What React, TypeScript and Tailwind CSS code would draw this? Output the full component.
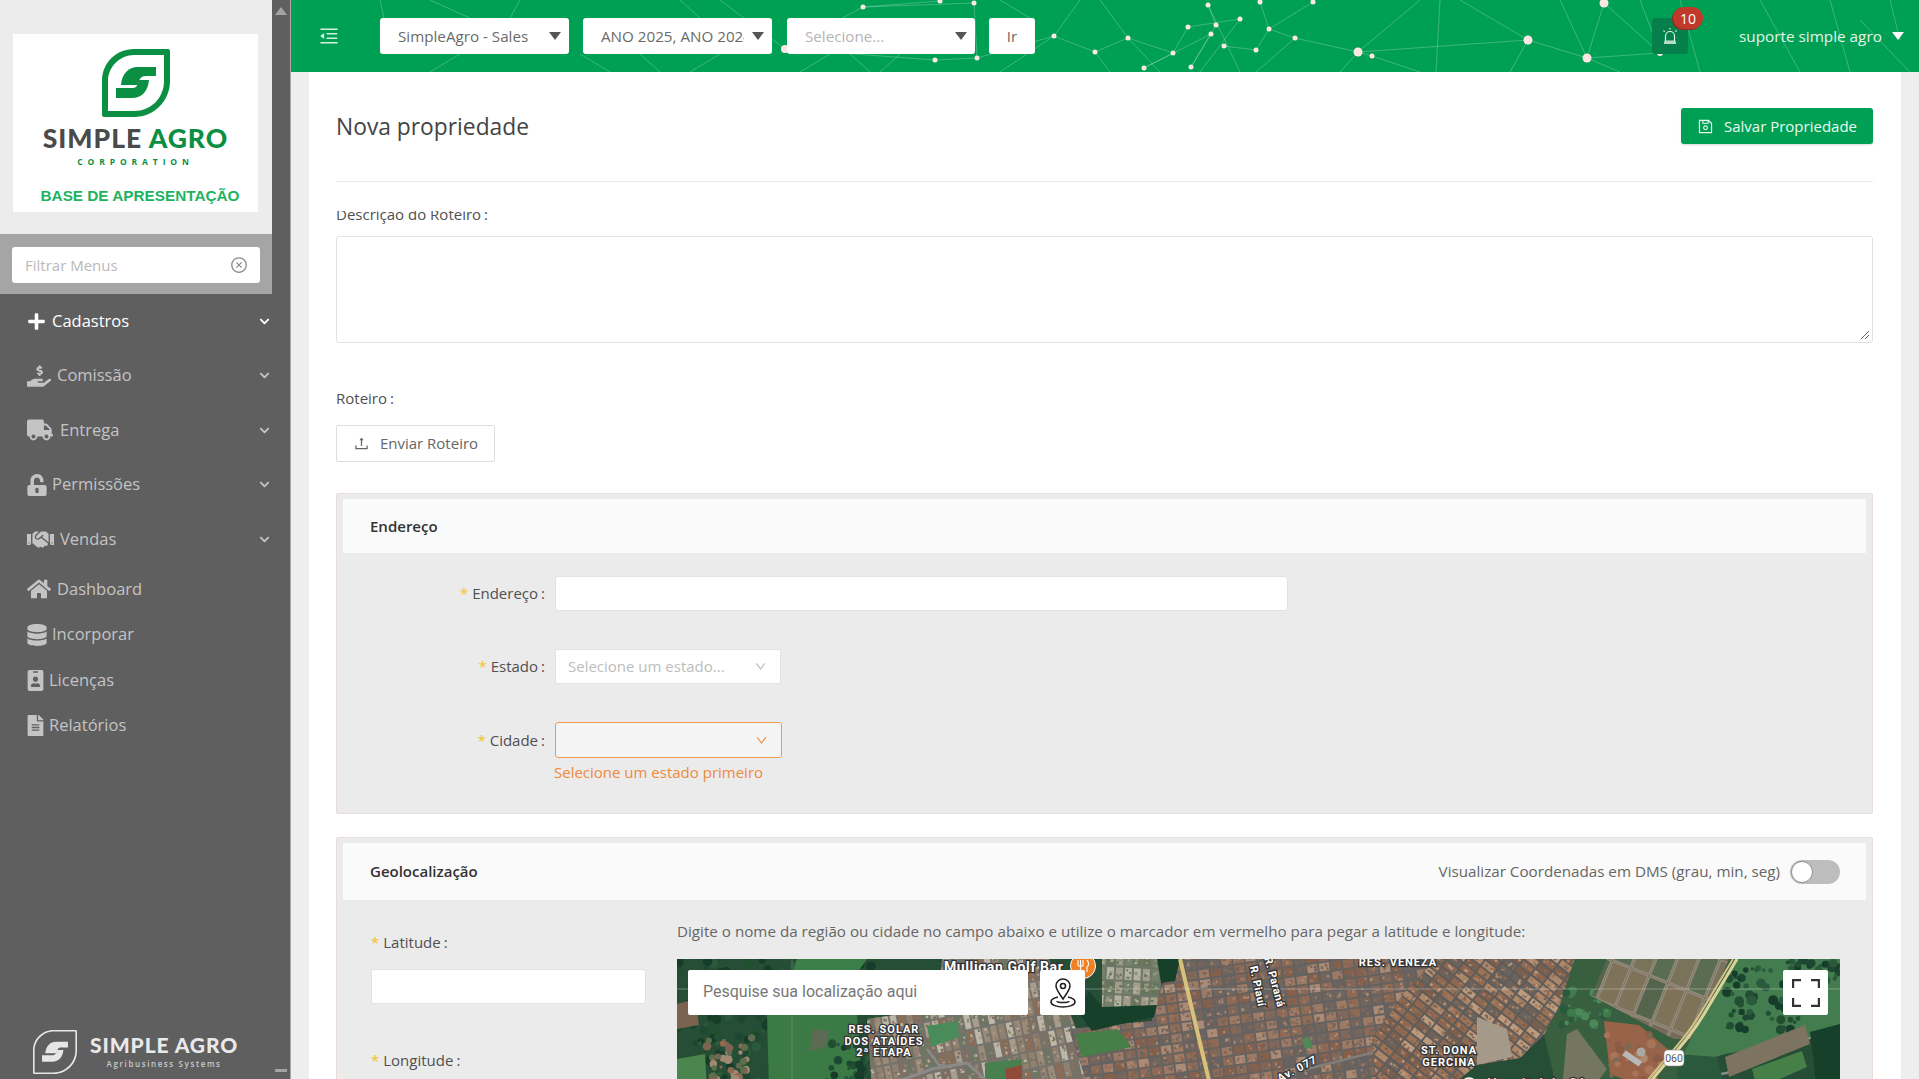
import { ReactNode } from "react";
import { AiOutlineCloseCircle, AiOutlineDown, AiOutlineMenuFold, AiOutlineSave, AiOutlineUpload } from "react-icons/ai";
import { FaChevronDown, FaDatabase, FaFileAlt, FaHandHoldingUsd, FaHandshake, FaHome, FaIdBadge, FaPlus, FaTruck, FaUnlockAlt } from "react-icons/fa";

const fieldBox = "h-[35px] bg-white border border-[#e2e2e2] rounded-[3px]";
const labelText = "text-[15px] text-[#505050]";
const star = "text-[#f2c522] mr-[4px]";

// sidebar items, first five open a submenu
const navItems = [
  { name: "Cadastros", icon: <FaPlus size={19} />, gap: "ml-[6px]", open: true },
  { name: "Comissão", icon: <FaHandHoldingUsd size={24} />, gap: "ml-[6px]" },
  { name: "Entrega", icon: <FaTruck size={26} />, gap: "ml-[7px]" },
  { name: "Permissões", icon: <FaUnlockAlt size={22} className="-ml-[1px]" />, gap: "ml-[4px]" },
  { name: "Vendas", icon: <FaHandshake size={27} />, gap: "ml-[6px]" },
];
const plainItems = [
  { name: "Dashboard", icon: <FaHome size={24} />, gap: "ml-[6px]" },
  { name: "Incorporar", icon: <FaDatabase size={22} className="-ml-[1px]" />, gap: "ml-[4px]" },
  { name: "Licenças", icon: <FaIdBadge size={21} className="-ml-[2px]" />, gap: "ml-[3px]" },
  { name: "Relatórios", icon: <FaFileAlt size={21} className="-ml-[2px]" />, gap: "ml-[3px]" },
];

function Leaf({ className, color, line = false }: { className: string; color: string; line?: boolean }) {
  const inner = line ? "M65.5 2.5 V32 C65.5 50 50 65.5 32 65.5 H2.5 V32 C2.5 16 16 2.5 32 2.5 Z" : "M62 6 V32 C62 49 49 62 32 62 H6 V32 C6 18 18 6 32 6 Z";
  return (
    <svg viewBox="0 0 68 68" className={className}>
      <path fill={color} fillRule="evenodd" d={`M66 0 Q68 0 68 2 V32 C68 52 52 68 32 68 H2 Q0 68 0 66 V32 C0 14 14 0 32 0 Z ${inner}`} />
      <path fill={color} d="M54 18 V27 H44 C39 27 37 30 36 36 H19 C20 25 26 18 36 18 Z" />
      <path fill={color} d="M14 39 H31 C35 39 36 35 37 31 H47 C46 42 40 49 30 49 H14 Z" />
    </svg>
  );
}

function Sidebar() {
  return (
    <aside className="w-[291px] h-full flex shrink-0 bg-[#5f5f60] border-r border-[#a9a9a9] font-['Open_Sans',sans-serif]">
      <div className="w-[272px] flex flex-col h-full">
        <div className="h-[234px] bg-[#ececec] pt-[34px] pl-[13px]">
          <div className="w-[245px] h-[178px] bg-white flex flex-col items-center pt-[15px]">
            <Leaf className="w-[68px] h-[68px]" color="#0b8f43" />
            <div className="mt-[9px] h-[24px] leading-[24px] text-[26.5px] font-black tracking-[1px] font-['Lato',sans-serif] whitespace-nowrap">
              <span className="text-[#4a4a4a]">SIMPLE </span><span className="text-[#0b8f43]">AGRO</span>
            </div>
            <div className="mt-[7px] h-[10px] leading-[10px] text-[8.5px] font-bold tracking-[4.9px] text-[#0b8f43]">CORPORATION</div>
            <div className="mt-[19px] ml-[9px] leading-[20px] text-[15.3px] font-bold text-[#1db35f] whitespace-nowrap font-['Liberation_Sans',sans-serif]">BASE DE APRESENTAÇÃO</div>
          </div>
        </div>
        <div className="h-[60px] bg-[#a5a5a5] px-[12px] pt-[13px]">
          <div className="h-[36px] bg-white rounded-[3px] flex items-center justify-between pl-[13px] pr-[12px]">
            <span className="text-[15px] text-[#b9b9b9]">Filtrar Menus</span>
            <AiOutlineCloseCircle size={18} className="text-[#8a8a8a]" />
          </div>
        </div>
        {navItems.map((item) => (
          <div key={item.name} className={`h-[54.5px] flex items-center pl-[27px] ${item.open ? "text-white" : "text-[#c4c4c4]"}`}>
            {item.icon}
            <span className={`text-[16.5px] ${item.gap}`}>{item.name}</span>
            <FaChevronDown size={11} className="ml-auto mr-[2px]" />
          </div>
        ))}
        {plainItems.map((item) => (
          <div key={item.name} className="h-[45.5px] flex items-center pl-[27px] text-[#c4c4c4]">
            {item.icon}
            <span className={`text-[16.5px] ${item.gap}`}>{item.name}</span>
          </div>
        ))}
        <div className="mt-auto pl-[33px] pb-[5px] flex items-center text-[#e9e9e9]">
          <Leaf className="w-[44px] h-[44px]" color="#e6e6e6" line />
          <div className="ml-[13px] flex flex-col items-center">
            <div className="text-[21px] leading-[20px] font-black tracking-[0.9px] font-['Lato',sans-serif] whitespace-nowrap">SIMPLE AGRO</div>
            <div className="text-[8px] leading-[12px] mt-[3px] font-semibold tracking-[1.6px] text-[#c9c9c9] whitespace-nowrap">Agribusiness Systems</div>
          </div>
        </div>
      </div>
      <div className="w-[18px] flex flex-col items-center justify-between py-[7px]">
        <div className="w-0 h-0 border-x-[6px] border-x-transparent border-b-[8px] border-b-[#a3a3a3]" />
        <div className="w-[12px] h-[3px] bg-[#a3a3a3]" />
      </div>
    </aside>
  );
}

// decorative network behind the top bar, coordinates are page pixels
const netDots: [number, number, number][] = [
  [863, 7, 2.5], [940, 1, 2.5], [974, 3, 2.5], [1054, 36, 2.5], [1095, 52, 2.5], [785, 49, 4], [935, 60, 2.5], [977, 58, 2.5],
  [1208, 5, 2.5], [1260, 2, 2.5], [1313, 2, 2.5], [1240, 19, 2.5], [1216, 25, 2.5], [1188, 27, 2.5], [1211, 34, 2.5], [1269, 29, 2.5],
  [1295, 38, 2.5], [1128, 38, 2.5], [1224, 46, 2.5], [1256, 50, 2.5], [1173, 53, 2.5], [1358, 52, 4.5], [1372, 56, 2.5], [1144, 68, 2.5],
  [1191, 67, 2.5], [1528, 40, 4.5], [1587, 58, 4.5], [1604, 3, 4.5], [1660, 53, 3],
];
const netLines: [number, number, number, number][] = [
  [863, 7, 940, 1], [863, 7, 974, 3], [974, 3, 977, 58], [863, 7, 785, 49], [785, 49, 720, 0], [785, 49, 935, 60], [935, 60, 977, 58], [977, 58, 1054, 36],
  [1054, 36, 1095, 52], [1054, 36, 1000, 72], [1095, 52, 1110, 72], [1054, 36, 1080, 0], [1095, 52, 1128, 38], [1128, 38, 1100, 0], [1128, 38, 1173, 53],
  [1173, 53, 1188, 27], [1173, 53, 1144, 68], [1188, 27, 1240, 19], [1216, 25, 1208, 5], [1211, 34, 1144, 68], [1211, 34, 1191, 67], [1216, 25, 1191, 67],
  [1224, 46, 1256, 50], [1256, 50, 1269, 29], [1269, 29, 1313, 2], [1269, 29, 1295, 38], [1295, 38, 1358, 52], [1295, 38, 1256, 72], [1358, 52, 1528, 40],
  [1358, 52, 1372, 56], [1358, 52, 1420, 0], [1358, 52, 1340, 72], [1372, 56, 1420, 72], [1528, 40, 1587, 58], [1528, 40, 1460, 0], [1528, 40, 1510, 72],
  [1587, 58, 1660, 53], [1587, 58, 1604, 3], [1587, 58, 1560, 0], [1604, 3, 1660, 53], [1660, 53, 1640, 0], [1620, 72, 1587, 58], [1260, 2, 1269, 29],
  [1440, 0, 1436, 72], [1208, 5, 1240, 72], [1128, 38, 1160, 72], [1240, 19, 1200, 72], [380, 0, 384, 18], [460, 54, 430, 72], [430, 0, 470, 18], [580, 54, 610, 72],
  [720, 54, 690, 72], [640, 54, 660, 72], [700, 18, 680, 0], [520, 0, 510, 18], [1700, 72, 1680, 0], [1760, 0, 1800, 72], [1830, 0, 1850, 72], [1860, 20, 1910, 72], [1890, 0, 1900, 40],
  [800, 72, 830, 54], [850, 54, 870, 72], [900, 54, 880, 72], [1000, 0, 1030, 18],
];

function NetworkBg() {
  return (
    <svg viewBox="291 0 1628 72" className="absolute inset-0 w-full h-full">
      {netLines.map((l, i) => (
        <line key={i} x1={l[0]} y1={l[1]} x2={l[2]} y2={l[3]} stroke="#ffffff" strokeOpacity={0.3} strokeWidth={0.8} />
      ))}
      {netDots.map((d, i) => (
        <circle key={i} cx={d[0]} cy={d[1]} r={d[2]} fill="#fde7e4" />
      ))}
    </svg>
  );
}

function TopSelect({ text, width, muted, className = "" }: { text: string; width: string; muted?: boolean; className?: string }) {
  return (
    <div className={`${width} ${className} h-[36px] bg-white rounded-[3px] flex items-center pl-[18px] pr-[8px]`}>
      <span className={`flex-1 overflow-hidden whitespace-nowrap text-[15.2px] ${muted ? "text-[#b5b5b5]" : "text-[#6a6a6a]"}`}>{text}</span>
      <span className="ml-[8px] w-0 h-0 shrink-0 border-x-[6px] border-x-transparent border-t-[8px] border-t-[#555]" />
    </div>
  );
}

function TopBar() {
  return (
    <header className="relative h-[72px] shrink-0 bg-[#00a054]">
      <NetworkBg />
      <div className="relative h-full flex items-center pl-[27px]">
        <AiOutlineMenuFold size={22} className="text-[#d5f0e0]" />
        <div className="flex items-center gap-[14px] ml-[40px]">
          <TopSelect text="SimpleAgro - Sales" width="w-[189px]" />
          <TopSelect text="ANO 2025, ANO 2024" width="w-[189px]" />
          <TopSelect text="Selecione..." width="w-[188px]" className="ml-[1px]" muted />
          <div className="w-[46px] h-[36px] bg-white rounded-[3px] flex items-center justify-center text-[15px] text-[#6a6a6a]">Ir</div>
        </div>
        <div className="relative ml-[617px] w-[36px] h-[36px] rounded-[3px] bg-[#05804a] flex items-center justify-center">
          <svg viewBox="0 0 20 20" className="w-[20px] h-[20px]" fill="none" stroke="#e6f6ec" strokeWidth="1.2">
            <path d="M5.5 15 V10 a4.5 4.5 0 0 1 9 0 V15" />
            <path d="M4 17 H16" strokeWidth="1.6" />
            <path d="M4.5 15.2 H15.5" />
            <path d="M10 2 V3.5 M3.5 4.5 L4.7 5.7 M16.5 4.5 L15.3 5.7" />
          </svg>
          <span className="absolute -top-[11px] -right-[15px] w-[30px] h-[22px] rounded-full bg-[#c0392b] shadow-[-1px_1px_0_#8f2a20] flex items-center justify-center text-[14px] text-white">10</span>
        </div>
        <span className="ml-[51px] text-[15.3px] text-[#e3f5ea] whitespace-nowrap">suporte simple agro</span>
        <span className="ml-[10px] w-0 h-0 border-x-[6px] border-x-transparent border-t-[8px] border-t-white" />
      </div>
    </header>
  );
}

// cheap seeded random so the map texture stays the same on every load
function makeRandom(seed: number) {
  let s = seed;
  return () => {
    s = (s * 16807) % 2147483647;
    return s / 2147483647;
  };
}

function cityCells(x0: number, y0: number, x1: number, y1: number, w: number, h: number, colors: string[], seed: number) {
  const rnd = makeRandom(seed);
  const cells: ReactNode[] = [];
  let n = 0;
  for (let y = y0; y < y1; y += h) {
    for (let x = x0; x < x1; x += w) {
      cells.push(<rect key={n++} x={x + 1} y={y + 1} width={w - 2} height={h - 2} fill={colors[Math.floor(rnd() * colors.length)]} />);
      for (let i = 0; i < 4; i++) {
        cells.push(<rect key={n++} x={x + 1 + rnd() * (w - 4)} y={y + 1 + rnd() * (h - 4)} width={1.5 + rnd() * 1.5} height={1.5 + rnd() * 1.5} fill={colors[Math.floor(rnd() * colors.length)]} />);
      }
    }
  }
  return cells;
}

function treeSpecks(x0: number, y0: number, x1: number, y1: number, count: number, colors: string[], seed: number) {
  const rnd = makeRandom(seed);
  return Array.from({ length: count }, (_, i) => (
    <circle key={i} cx={x0 + rnd() * (x1 - x0)} cy={y0 + rnd() * (y1 - y0)} r={1.5 + rnd() * 3.5} fill={colors[Math.floor(rnd() * colors.length)]} />
  ));
}

const brownHouses = ["#8f6a55", "#80675a", "#9c7a65", "#6f6660", "#ab8b75", "#85604c", "#686360"];
const creamHouses = ["#a89c8a", "#91806e", "#bdb7a9", "#7d7063", "#9c8b77", "#6d7663", "#8d6c56"];
const diagHouses = ["#9c7357", "#ad8768", "#7d5f4d", "#bb9a7d", "#8f6850", "#6c635c"];
const forest = ["#1f4730", "#234f33", "#2a5a3a", "#183d2a"];

const mapLabel = "font-['Roboto',sans-serif] font-bold";
const labelStroke = { paintOrder: "stroke" as const, stroke: "#333", strokeWidth: 2.5, fill: "#fff", letterSpacing: 1 };

function SatelliteMap() {
  return (
    <svg viewBox="0 0 1163 130" className="w-full h-full block" preserveAspectRatio="xMinYMin slice">
      <defs>
        <clipPath id="cityA"><polygon points="195,130 190,60 260,50 265,0 372,0 395,60 405,85 420,130" /></clipPath>
        <clipPath id="cityB"><polygon points="412,130 392,70 475,62 492,0 770,0 730,30 695,80 700,130" /></clipPath>
        <clipPath id="cityT"><polygon points="425,0 488,0 480,48 425,52" /></clipPath>
        <clipPath id="cityC"><polygon points="760,0 898,0 883,46 867,76 843,99 800,106 770,130 700,130 695,80 730,30" /></clipPath>
        <clipPath id="plots"><polygon points="930,0 1052,0 1033,43 1013,80 997,80 915,37" /></clipPath>
        <filter id="soft"><feGaussianBlur stdDeviation="0.6" /></filter>
      </defs>
      <g filter="url(#soft)">
        <rect width="1163" height="130" fill="#264d34" />
        {treeSpecks(0, 0, 200, 130, 260, forest, 5)}
        <polygon points="90,56 180,56 186,130 92,130" fill="#3a7a45" />
        <polygon points="120,0 190,0 180,14 115,14" fill="#3a7f4a" />
        <polygon points="0,100 28,95 30,130 0,130" fill="#4b8650" />
        <polygon points="0,45 18,40 22,66 0,70" fill="#7c6450" />
        {treeSpecks(30, 78, 75, 128, 40, ["#7d6451", "#8e6b52", "#5f6d50", "#a08872"], 9)}
        <polygon points="136,70 152,72 148,88 133,92" fill="#5f6a55" />
        {treeSpecks(150, 84, 192, 130, 40, forest, 14)}

        <polygon points="195,130 190,60 260,50 265,0 372,0 395,60 405,85 420,130" fill="#75726d" />
        <g clipPath="url(#cityA)">
          <g transform="rotate(-12 300 60)">{cityCells(150, -50, 450, 190, 8, 17, creamHouses, 11)}</g>
          <polygon points="250,67 280,62 282,78 254,88" fill="#4a8c5a" />
          <polygon points="308,104 345,100 345,125 308,125" fill="#4a8050" />
          <polygon points="328,110 345,106 345,124 330,124" fill="#934a38" />
          <path d="M200 130 L255 110 L290 104 L310 122" stroke="#8a8a88" strokeWidth="3" fill="none" />
          <path d="M250 90 L262 106 L275 108" stroke="#8a8a88" strokeWidth="2.5" fill="none" />
        </g>

        <polygon points="412,130 392,70 475,62 492,0 770,0 730,30 695,80 700,130" fill="#656260" />
        <g clipPath="url(#cityB)">
          <g transform="rotate(-8 600 60)">{cityCells(360, -70, 800, 200, 12, 10, brownHouses, 37)}</g>
          <polygon points="625,80 632,78 636,88 628,90" fill="#4f8a55" />
          <path d="M630 110 L730 85 L760 115" stroke="#817e7a" strokeWidth="2.5" fill="none" />
          <path d="M690 128 L745 115" stroke="#817e7a" strokeWidth="2" fill="none" />
        </g>

        <polygon points="425,0 488,0 480,48 425,52" fill="#6e7668" />
        <g clipPath="url(#cityT)">
          <g transform="rotate(3 450 30)">{cityCells(410, -20, 500, 70, 9, 14, ["#8f9582", "#b4b2a0", "#75826a", "#a49d8a", "#66755a"], 71)}</g>
        </g>
        <polygon points="412,32 425,48 480,46 477,58 440,66 415,72 400,52" fill="#173f2c" />
        <polygon points="480,0 503,0 498,22 484,24" fill="#173f2c" />
        <polygon points="398,75 440,70 455,88 405,98" fill="#467f48" />

        <polygon points="760,0 898,0 883,46 867,76 843,99 800,106 770,130 700,130 695,80 730,30" fill="#5e5c5a" />
        <g clipPath="url(#cityC)">
          <g transform="rotate(38 800 60)">{cityCells(650, -120, 960, 240, 15, 8, diagHouses, 101)}</g>
          <polygon points="800,58 830,70 835,98 800,106" fill="#a59a8a" />
        </g>

        <polygon points="898,0 1060,0 1000,130 880,130 867,76 883,46" fill="#375f40" />
        {treeSpecks(885, 30, 930, 70, 30, ["#2a5a3a", "#3f7a4d", "#4c8a58"], 22)}
        <polygon points="930,0 1052,0 1033,43 1013,80 997,80 915,37" fill="#7c7360" />
        <g clipPath="url(#plots)">
          <g transform="rotate(22 980 40)" stroke="#958e80" strokeWidth="1.2">
            {[0, 1, 2, 3, 4, 5, 6, 7].map((i) => (
              <rect key={i} x={905 + i * 20} y={-20} width={18} height={40} fill={i % 2 ? "#5a6d52" : "#79735c"} />
            ))}
            {[0, 1, 2, 3, 4, 5, 6, 7].map((i) => (
              <rect key={i} x={905 + i * 20} y={22} width={18} height={40} fill={i % 3 ? "#7e7259" : "#55654d"} />
            ))}
            {[0, 1, 2, 3, 4, 5, 6, 7].map((i) => (
              <rect key={i} x={905 + i * 20} y={64} width={18} height={30} fill="#786b58" />
            ))}
          </g>
        </g>
        <polygon points="927,62 962,66 993,92 973,130 933,115" fill="#996449" />
        {treeSpecks(930, 72, 985, 126, 30, ["#a8745a", "#8a5c44", "#b08a70", "#7c6b55"], 31)}
        <polygon points="890,75 900,70 930,110 915,130 885,130" fill="#74765f" />
        <rect x="945" y="97" width="20" height="6" fill="#b8b8b6" transform="rotate(35 956 100)" />
        <circle cx="964" cy="93" r="4.5" fill="#a9a9a2" />
        <path d="M1000 95 C1005 118 1030 118 1050 114 L1130 80 L1163 66" stroke="#8c8c8a" strokeWidth="2.5" fill="none" />

        <polygon points="1060,0 1163,0 1163,70 1105,85 1048,95 1000,110 1025,55" fill="#437c4f" />
        {treeSpecks(1050, 8, 1125, 72, 60, forest, 41)}
        {treeSpecks(1110, 0, 1163, 28, 30, forest, 43)}
        <polygon points="1133,73 1163,65 1163,130 1140,130" fill="#173f2c" />
        <polygon points="1000,95 1040,98 1048,130 1000,130" fill="#2a5a3a" />
        <polygon points="1048,98 1128,66 1133,85 1052,118" fill="#7c7360" />
        <polygon points="1075,110 1125,92 1130,108 1080,130" fill="#467f48" />

        <path d="M1060 0 L1030 50 C1010 85 990 100 968 130" stroke="#dcd29a" strokeWidth="3" fill="none" />
        <path d="M1056 0 L1026 50 C1006 85 986 100 964 130" stroke="#cfc486" strokeWidth="2" fill="none" />
        <path d="M503 0 L534 130" stroke="#d8c27a" strokeWidth="4" fill="none" />
      </g>
      <line x1="0" y1="30" x2="1163" y2="30" stroke="#ffffff" strokeOpacity="0.3" />
      <line x1="115" y1="0" x2="115" y2="130" stroke="#ffffff" strokeOpacity="0.18" />

      <text x="267" y="13" fontSize="14" className={mapLabel} style={{ ...labelStroke, letterSpacing: 0.6 }}>Mulligan Golf Bar</text>
      <circle cx="406" cy="7" r="12.5" fill="#f08026" stroke="#fff" strokeWidth="1" />
      <path d="M401 1 V7 M403.5 1 V7 M406 1 V7 M401 7 H406 M403.5 7 V13 M410 1 C412 3 412 7 410 8 V13" stroke="#fff" strokeWidth="1.1" fill="none" />
      <text x="721" y="7" fontSize="11" textAnchor="middle" className={mapLabel} style={labelStroke}>RES. VENEZA</text>
      {["RES. SOLAR", "DOS ATAÍDES", "2ª ETAPA"].map((t, i) => (
        <text key={t} x="207" y={74 + i * 11.5} fontSize="11" textAnchor="middle" className={mapLabel} style={labelStroke}>{t}</text>
      ))}
      <text x="772" y="95" fontSize="11" textAnchor="middle" className={mapLabel} style={labelStroke}>ST. DONA</text>
      <text x="772" y="107" fontSize="11" textAnchor="middle" className={mapLabel} style={labelStroke}>GERCINA</text>
      <text x="577" y="28" fontSize="11" textAnchor="middle" transform="rotate(78 577 28)" className={mapLabel} style={{ ...labelStroke, letterSpacing: 0.4 }}>R. Piauí</text>
      <text x="594" y="24" fontSize="11" textAnchor="middle" transform="rotate(75 594 24)" className={mapLabel} style={{ ...labelStroke, letterSpacing: 0.4 }}>R. Paraná</text>
      <text x="622" y="113" fontSize="11" textAnchor="middle" transform="rotate(-28 622 113)" className={mapLabel} style={labelStroke}>Av. 077</text>
      <rect x="987" y="91" width="20" height="16" rx="4" fill="#fff" stroke="#888" strokeWidth="0.6" />
      <text x="997" y="103" fontSize="10.5" textAnchor="middle" fill="#555" fontFamily="Roboto, sans-serif">060</text>
      <circle cx="792" cy="127" r="8" fill="#ea4335" stroke="#fff" strokeWidth="1.5" />
      <text x="810" y="130" fontSize="14" className={mapLabel} style={{ ...labelStroke, fill: "#f7c6c4", letterSpacing: 0.5 }}>Hospital do Câncer</text>
    </svg>
  );
}

function FormRow({ label, children }: { label: string; children: ReactNode }) {
  return (
    <div className="flex items-center">
      <div className={`w-[202px] text-right ${labelText}`}><span className={star}>*</span>{label}<span className="ml-[3px]">:</span></div>
      <div className="ml-[10px]">{children}</div>
    </div>
  );
}

function MainArea() {
  return (
    <div className="flex-1 min-h-0 bg-[#eeeeee] px-[18px] font-['Open_Sans',sans-serif]">
      <div className="h-full bg-white pl-[27px] pr-[28px] overflow-hidden">
        <div className="h-[110px] border-b border-[#e8e8e8] pt-[36px] flex items-start justify-between">
          <h1 className="text-[22.8px] leading-[37px] text-[#444]">Nova propriedade</h1>
          <button className="w-[192px] h-[36px] rounded-[3px] bg-[#00a054] text-[#eafaf1] text-[15px] flex items-center justify-center shadow-[0_1px_2px_rgba(0,0,0,0.15)]">
            <AiOutlineSave size={17} className="mr-[10px]" />Salvar Propriedade
          </button>
        </div>

        <div className="mt-[29px] h-[14px] overflow-hidden flex items-end">
          <div className={`${labelText} leading-[22px] shrink-0`}>Descrição do Roteiro<span className="ml-[3px]">:</span></div>
        </div>
        <div className="relative mt-[11px] h-[107px] bg-white border border-[#e2e2e2] rounded-[3px]">
          <svg viewBox="0 0 10 10" className="absolute right-[2px] bottom-[2px] w-[10px] h-[10px]" stroke="#666" strokeWidth="1">
            <path d="M1 9 L9 1 M5 9 L9 5" />
          </svg>
        </div>

        <div className={`mt-[44px] leading-[22px] ${labelText}`}>Roteiro<span className="ml-[3px]">:</span></div>
        <button className="mt-[16px] w-[159px] h-[37px] border border-[#dedede] bg-white text-[15px] text-[#666] flex items-center justify-center rounded-[2px]">
          <AiOutlineUpload size={17} className="mr-[10px]" />Enviar Roteiro
        </button>

        <section className="mt-[31px] h-[321px] bg-[#ebebeb] border border-[#e8dcdc] rounded-[2px] px-[6px] py-[5px]">
          <div className="h-[54px] bg-[#fafafa] flex items-center pl-[27px] text-[15px] font-semibold text-[#333]">Endereço</div>
          <div className="pt-[23px] flex flex-col gap-[38px]">
            <FormRow label="Endereço"><div className={`w-[733px] ${fieldBox}`} /></FormRow>
            <FormRow label="Estado">
              <div className={`w-[226px] ${fieldBox} flex items-center justify-between pl-[12px] pr-[13px]`}>
                <span className="text-[15px] text-[#bdbdbd]">Selecione um estado...</span>
                <AiOutlineDown size={13} className="text-[#b5b5b5]" />
              </div>
            </FormRow>
            <FormRow label="Cidade">
              <div className="relative w-[227px] h-[36px] bg-[#f4f4f4] border border-[#ee9a4d] rounded-[3px] flex items-center justify-end pr-[13px]">
                <AiOutlineDown size={13} className="text-[#ee8a3a]" />
                <div className="absolute left-[-2px] top-[38px] text-[15px] leading-[22px] text-[#ee8a3a] whitespace-nowrap">Selecione um estado primeiro</div>
              </div>
            </FormRow>
          </div>
        </section>

        <section className="mt-[23px] bg-[#ebebeb] border border-[#e8dcdc] rounded-[2px] px-[6px] py-[5px]">
          <div className="h-[57px] bg-[#fafafa] flex items-center justify-between pl-[27px]">
            <span className="text-[15px] font-semibold text-[#333]">Geolocalização</span>
            <div className="flex items-center mr-[26px]">
              <span className="text-[15.2px] text-[#666]">Visualizar Coordenadas em DMS (grau, min, seg)</span>
              <div className="ml-[10px] w-[50px] h-[24px] rounded-full bg-[#bdbdbd] flex items-center pl-[1px]">
                <span className="w-[22px] h-[22px] rounded-full bg-white border border-[#8f8f8f]" />
              </div>
            </div>
          </div>
          <div className="flex pl-[28px] pr-[26px] pt-[20px]">
            <div className="w-[306px] shrink-0 pt-[11px]">
              <div className={`leading-[22px] ${labelText}`}><span className={star}>*</span>Latitude<span className="ml-[3px]">:</span></div>
              <div className={`mt-[16px] w-[275px] ${fieldBox}`} />
              <div className={`mt-[45px] leading-[22px] ${labelText}`}><span className={star}>*</span>Longitude<span className="ml-[3px]">:</span></div>
            </div>
            <div className="flex-1 min-w-0">
              <div className="text-[15.2px] leading-[22px] text-[#666] whitespace-nowrap">Digite o nome da região ou cidade no campo abaixo e utilize o marcador em vermelho para pegar a latitude e longitude:</div>
              <div className="relative mt-[17px] h-[130px] overflow-hidden">
                <SatelliteMap />
                <div className="absolute left-[11px] top-[11px] w-[340px] h-[45px] bg-white rounded-[2px] flex items-center pl-[15px] pb-[2px] text-[16px] text-[#777] font-['Roboto',sans-serif]">Pesquise sua localização aqui</div>
                <div className="absolute left-[363px] top-[11px] w-[45px] h-[45px] bg-white rounded-[2px] flex items-center justify-center">
                  <svg viewBox="0 0 28 32" className="w-[28px] h-[32px]" fill="none" stroke="#222" strokeWidth="1.6">
                    <path d="M14 22 C9 15 7 12 7 9 a7 7 0 0 1 14 0 C21 12 19 15 14 22 Z" />
                    <circle cx="14" cy="9" r="2.5" />
                    <path d="M9 20 C4 21 2 23 2 25 C2 28 8 30 14 30 C20 30 26 28 26 25 C26 23 24 21 19 20" />
                    <path d="M8 24 C8 26 20 26 20 24" />
                  </svg>
                </div>
                <div className="absolute right-[12px] top-[11px] w-[45px] h-[45px] bg-white rounded-[2px] flex items-center justify-center">
                  <svg viewBox="0 0 28 28" className="w-[28px] h-[28px]" fill="none" stroke="#333" strokeWidth="2.4">
                    <path d="M1 9 V1 H9 M19 1 H27 V9 M27 19 V27 H19 M9 27 H1 V19" />
                  </svg>
                </div>
              </div>
            </div>
          </div>
        </section>
      </div>
    </div>
  );
}

export default function App() {
  return (
    <div className="w-screen h-screen overflow-hidden flex font-['Open_Sans',sans-serif]">
      <Sidebar />
      <div className="flex-1 min-w-0 flex flex-col h-full">
        <TopBar />
        <MainArea />
      </div>
    </div>
  );
}
